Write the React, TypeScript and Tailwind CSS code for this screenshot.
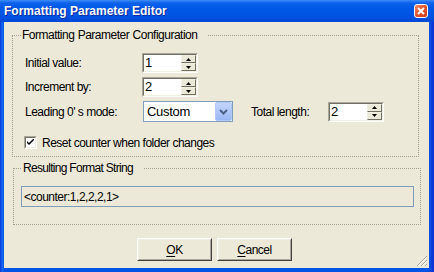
import React from "react";

function Spin({ v }: { v: string }) {
  return (
    <div className="w-[56px] h-[20px] border border-t-[#aca899] border-l-[#aca899] border-b-white border-r-white">
      <div className="w-full h-full border border-t-[#716f64] border-l-[#716f64] border-b-[#f1efe2] border-r-[#f1efe2] bg-white flex">
        <div className="flex-1 pl-[1px] leading-[16px] text-[13px] tracking-normal">{v}</div>
        <div className="w-[15px] flex flex-col">
          <SpinBtn up />
          <SpinBtn />
        </div>
      </div>
    </div>
  );
}

function SpinBtn({ up }: { up?: boolean }) {
  return (
    <div className="flex-1 bg-[#ece9d8] border border-t-[#f1efe2] border-l-[#f1efe2] border-b-[#716f64] border-r-[#716f64] flex items-center justify-center">
      <svg width="5" height="3" viewBox="0 0 5 3">
        {up ? (
          <path d="M2.5 0 L5 3 L0 3 Z" fill="#000" />
        ) : (
          <path d="M0 0 L5 0 L2.5 3 Z" fill="#000" />
        )}
      </svg>
    </div>
  );
}

function Button({ children }: { children: React.ReactNode }) {
  return (
    <div className="w-[75px] h-[23px] border border-t-white border-l-white border-b-[#404040] border-r-[#404040]">
      <div className="w-full h-full border border-t-[#f1efe2] border-l-[#f1efe2] border-b-[#aca899] border-r-[#aca899] flex items-center justify-center">
        {children}
      </div>
    </div>
  );
}

export default function App() {
  return (
    <div className="w-[434px] h-[272px] bg-[linear-gradient(to_right,#0831d9_0px,#166aee_2px,#0055e5_4px,#0055e5_428px,#0a46d9_431px,#0831d9_434px)] flex flex-col font-['Liberation_Sans',Arial,sans-serif] text-[12px] tracking-[-0.5px] text-black select-none">
      <div className="h-[22px] flex items-center pl-[4px] pr-[6px] bg-[linear-gradient(to_bottom,#3c8cf8_0px,#0d62ea_3px,#0058e6_8px,#0054e3_16px,#0046d6_22px)]">
        <span className="flex-1 text-white font-bold text-[12px] tracking-normal [text-shadow:1px_1px_#0a2a9c]">
          Formatting Parameter Editor
        </span>
        <div className="w-[14px] h-[14px] rounded-[3px] border border-white bg-[linear-gradient(135deg,#f08a6c,#e0512a_50%,#c9401e)] flex items-center justify-center">
          <svg width="8" height="8" viewBox="0 0 8 8">
            <path d="M1 1 L7 7 M7 1 L1 7" stroke="#fff" strokeWidth="2" />
          </svg>
        </div>
      </div>
      <div className="flex-1 ml-[4px] mr-[5px] mb-[4px] bg-[#ece9d8] relative flex flex-col">
        <div className="mt-[13px] ml-[8px] w-[407px] h-[122px] relative border border-dotted border-[#a09f8f]">
          <div className="absolute left-[8px] top-[-9px] pl-[1px] pr-[11px] bg-[#ece9d8] leading-[16px] [word-spacing:0.5px]">
            Formatting Parameter Configuration
          </div>
          <div className="pl-[12px] pt-[17px] flex flex-col gap-[4px]">
            <div className="flex items-center h-[20px]">
              <div className="w-[117px]">Initial value:</div>
              <Spin v="1" />
            </div>
            <div className="flex items-center h-[20px]">
              <div className="w-[117px]">Increment by:</div>
              <Spin v="2" />
            </div>
            <div className="flex items-center h-[21px]">
              <div className="w-[118px]">Leading 0' s mode:</div>
              <div className="w-[90px] h-[21px] border border-[#7f9db9] bg-white flex items-center">
                <div className="flex-1 pl-[3px] text-[13px] tracking-[-0.3px]">Custom</div>
                <div className="w-[17px] h-[19px] rounded-[2px] border border-[#b1c7f5] bg-[linear-gradient(to_bottom,#c3d5fd,#b0c7f9_50%,#9bb7f3)] flex items-center justify-center">
                  <svg width="9" height="6" viewBox="0 0 9 6">
                    <path d="M1 1 L4.5 4.5 L8 1" stroke="#4d6185" strokeWidth="2" fill="none" />
                  </svg>
                </div>
              </div>
              <div className="ml-[18px] w-[77px]">Total length:</div>
              <Spin v="2" />
            </div>
            <div className="flex items-center mt-[10px] ml-[-1px] h-[13px]">
              <div className="w-[13px] h-[13px] border border-t-[#aca899] border-l-[#aca899] border-b-white border-r-white">
                <div className="w-full h-full border border-t-[#716f64] border-l-[#716f64] border-b-[#f1efe2] border-r-[#f1efe2] bg-white flex items-center justify-center">
                  <svg width="7" height="7" viewBox="0 0 7 7">
                    <path d="M0 2 L0 4 L2 6 L7 1 L7 -1 L2 4 Z" fill="#000" />
                  </svg>
                </div>
              </div>
              <div className="ml-[5px]">Reset counter when folder changes</div>
            </div>
          </div>
        </div>
        <div className="mt-[11px] ml-[9px] w-[408px] h-[57px] relative border border-dotted border-[#a09f8f]">
          <div className="absolute left-[8px] top-[-9px] pl-[1px] pr-[11px] bg-[#ece9d8] leading-[16px] tracking-[-0.7px]">
            Resulting Format String
          </div>
          <div className="ml-[7px] mt-[17px] w-[393px] h-[21px] border border-[#7f9db9] flex items-center pl-[2px]">
            &lt;counter:1,2,2,2,1&gt;
          </div>
        </div>
        <div className="mt-[13px] ml-[133px] flex gap-[5px]">
          <Button>
            <span className="underline underline-offset-2">O</span>K
          </Button>
          <Button>
            <span className="underline underline-offset-2">C</span>ancel
          </Button>
        </div>
        <svg className="absolute right-[1px] bottom-[1px]" width="12" height="12" viewBox="0 0 12 12">
          <path d="M11 1 L1 11 M11 5 L5 11 M11 9 L9 11" stroke="#aca899" strokeWidth="1" />
          <path d="M11 2 L2 11 M11 6 L6 11 M11 10 L10 11" stroke="#fff" strokeWidth="1" />
        </svg>
      </div>
    </div>
  );
}
